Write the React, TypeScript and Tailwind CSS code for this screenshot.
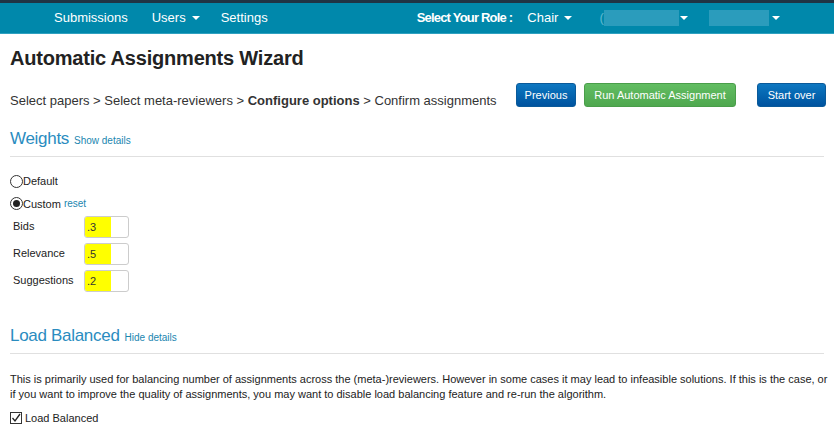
import React from 'react';

const Caret = ({ gap = 'ml-1.5' }: { gap?: string }) => (
  <span className={`${gap} inline-block w-0 h-0 border-x-[4px] border-x-transparent border-t-[4px] border-t-white align-middle`} />
);

const WeightRow = ({ label, value }: { label: string; value: string }) => (
  <div className="flex items-center h-[27px]">
    <span className="w-[74px] pl-[3px] text-[11px] text-[#222]">{label}</span>
    <div className="w-[45px] h-[22px] rounded-[3px] border border-[#ccc] bg-white overflow-hidden flex">
      <span className="bg-[#ffff00] px-[2px] text-[11px] leading-[20px] text-[#333] w-[60%]">{value}</span>
    </div>
  </div>
);

export default function App() {
  return (
    <div className="w-[834px] h-[444px] bg-white overflow-hidden font-['Liberation_Sans',Arial,sans-serif] text-[#333]">
      {/* Navbar */}
      <div className="h-[3px] bg-[#1f3445]" />
      <div className="h-[31px] bg-[#0088ab] border-b border-[#2fa1c0] flex items-center text-white text-[13px]">
        <div className="flex items-center pl-[54px] gap-[24px]">
          <span>Submissions</span>
          <span className="flex items-center">Users<Caret /></span>
          <span className="ml-[-3px]">Settings</span>
        </div>
        <div className="flex items-center ml-[149px]">
          <span className="font-bold tracking-[-0.8px]">Select Your Role :</span>
          <span className="ml-[15px] flex items-center">Chair<Caret /></span>
          <span className="ml-[27px] flex items-center">
            <span className="text-[#5fb8d0]">(</span>
            <span className="w-[75px] h-[16px] bg-[#2b9cbc]" />
            <Caret gap="ml-[1px]" />
          </span>
          <span className="ml-[21px] flex items-center">
            <span className="w-[60px] h-[16px] bg-[#2b9cbc]" />
            <Caret gap="ml-[3px]" />
          </span>
        </div>
      </div>

      <div className="px-[10px]">
        <h1 className="text-[20px] font-bold text-[#222] mt-[12px] leading-[24px] tracking-[-0.2px]">Automatic Assignments Wizard</h1>

        <div className="flex items-start mt-[13px]">
          <div className="text-[13px] text-[#333] w-[506px] shrink-0 pt-[8px]">
            Select papers &gt; Select meta-reviewers &gt; <span className="font-bold">Configure options</span> &gt; Confirm assignments
          </div>
          <button className="w-[60px] h-[24px] shrink-0 whitespace-nowrap rounded-[3px] text-white text-[11px] bg-gradient-to-b from-[#0e78c1] to-[#00539f] border border-[#0a5a9a]">Previous</button>
          <button className="ml-[8px] w-[152px] h-[24px] shrink-0 whitespace-nowrap rounded-[3px] text-white text-[11px] bg-gradient-to-b from-[#62bd62] to-[#4fa84f] border border-[#4a9e4a]">Run Automatic Assignment</button>
          <button className="ml-[21px] w-[69px] h-[24px] shrink-0 whitespace-nowrap rounded-[3px] text-white text-[11px] bg-gradient-to-b from-[#0e78c1] to-[#00539f] border border-[#0a5a9a]">Start over</button>
        </div>

        <div className="mt-[15px] flex items-baseline">
          <span className="text-[17px] tracking-[-0.3px] text-[#2a8cbf]">Weights</span>
          <span className="ml-[5px] text-[10px] text-[#1a86b0]">Show details</span>
        </div>
        <div className="mt-[5px] border-t border-[#e0e0e0]" />

        <div className="mt-[16px] flex items-center text-[11px] text-[#222]">
          <span className="w-[13px] h-[13px] rounded-full border border-[#333] bg-white" />
          <span>Default</span>
        </div>
        <div className="mt-[6px] flex items-center text-[11px] text-[#222]">
          <span className="w-[13px] h-[13px] rounded-full border border-[#333] bg-white flex items-center justify-center">
            <span className="w-[7px] h-[7px] rounded-full bg-[#222]" />
          </span>
          <span>Custom</span>
          <span className="ml-[3px] text-[10px] text-[#1a86b0]">reset</span>
        </div>
        <div className="mt-[1px]">
          <WeightRow label="Bids" value=".3" />
          <WeightRow label="Relevance" value=".5" />
          <WeightRow label="Suggestions" value=".2" />
        </div>

        <div className="mt-[29px] flex items-baseline">
          <span className="text-[17px] tracking-[-0.3px] text-[#2a8cbf]">Load Balanced</span>
          <span className="ml-[5px] text-[10px] text-[#1a86b0]">Hide details</span>
        </div>
        <div className="mt-[4px] border-t border-[#e0e0e0]" />

        <p className="mt-[18px] mr-[-5px] text-[11px] leading-[15px] text-[#222]">
          This is primarily used for balancing number of assignments across the (meta-)reviewers. However in some cases it may lead to infeasible solutions. If this is the case, or if you want to improve the quality of assignments, you may want to disable load balancing feature and re-run the algorithm.
        </p>
        <div className="mt-[8px] flex items-center text-[11px] text-[#222]">
          <span className="w-[12px] h-[12px] border border-[#333] bg-white mr-[3px] flex items-center justify-center">
            <svg width="10" height="10" viewBox="0 0 10 10">
              <path d="M1.5 5 L4 8 L9 1" fill="none" stroke="#222" strokeWidth="1.3" />
            </svg>
          </span>
          <span>Load Balanced</span>
        </div>
      </div>
    </div>
  );
}
